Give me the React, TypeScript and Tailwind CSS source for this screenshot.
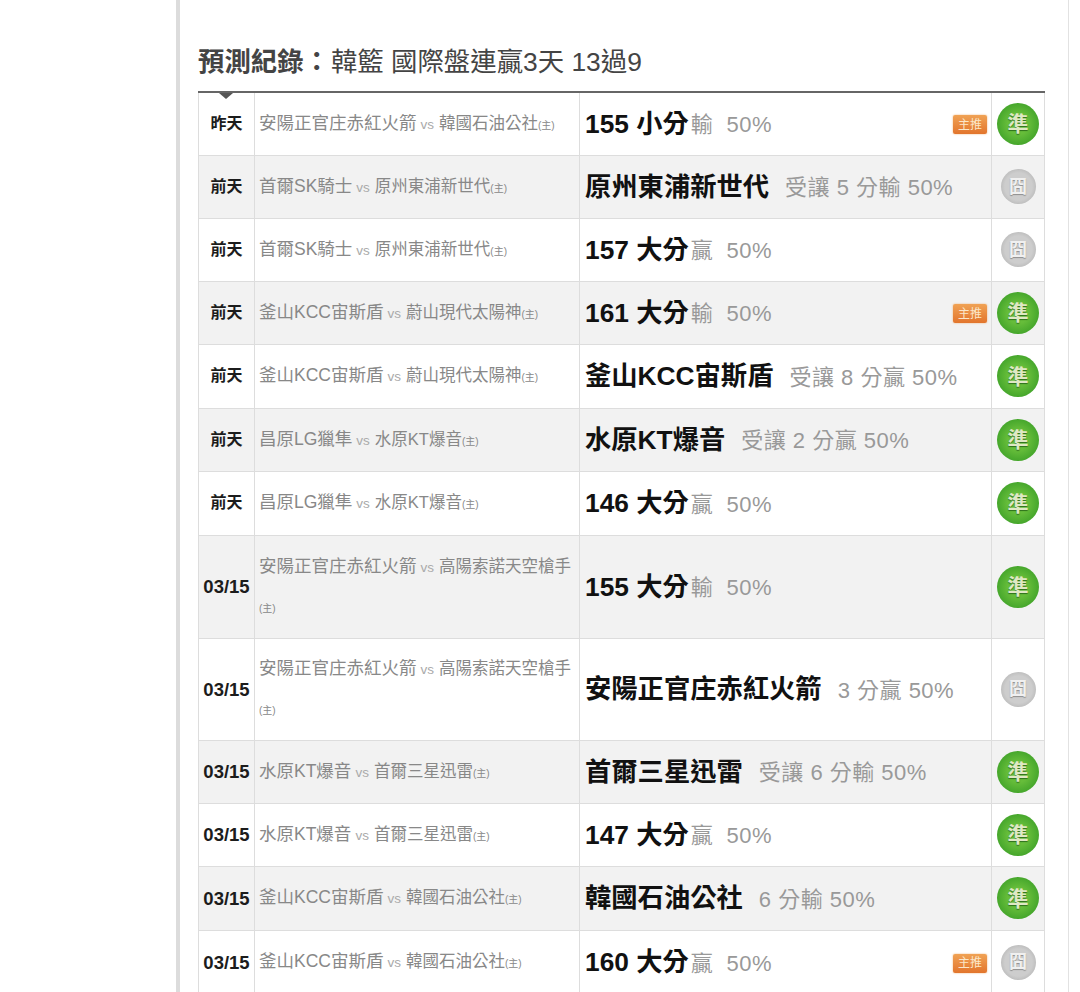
import React from "react";

type Row = {
  date: string;
  home: string;
  away: string;
  pick: string;
  note: string;
  top?: boolean;
  hit: boolean;
  h: number;
};

const rows: Row[] = [
  { date: "昨天", home: "安陽正官庄赤紅火箭", away: "韓國石油公社", pick: "155 小分", note: "輸\u00a0 50%", top: true, hit: true, h: 63 },
  { date: "前天", home: "首爾SK騎士", away: "原州東浦新世代", pick: "原州東浦新世代", note: "受讓 5 分輸 50%", hit: false, h: 63 },
  { date: "前天", home: "首爾SK騎士", away: "原州東浦新世代", pick: "157 大分", note: "贏\u00a0 50%", hit: false, h: 63 },
  { date: "前天", home: "釜山KCC宙斯盾", away: "蔚山現代太陽神", pick: "161 大分", note: "輸\u00a0 50%", top: true, hit: true, h: 63 },
  { date: "前天", home: "釜山KCC宙斯盾", away: "蔚山現代太陽神", pick: "釜山KCC宙斯盾", note: "受讓 8 分贏 50%", hit: true, h: 64 },
  { date: "前天", home: "昌原LG獵隼", away: "水原KT爆音", pick: "水原KT爆音", note: "受讓 2 分贏 50%", hit: true, h: 63 },
  { date: "前天", home: "昌原LG獵隼", away: "水原KT爆音", pick: "146 大分", note: "贏\u00a0 50%", hit: true, h: 64 },
  { date: "03/15", home: "安陽正官庄赤紅火箭", away: "高陽索諾天空槍手", pick: "155 大分", note: "輸\u00a0 50%", hit: true, h: 103 },
  { date: "03/15", home: "安陽正官庄赤紅火箭", away: "高陽索諾天空槍手", pick: "安陽正官庄赤紅火箭", note: "3 分贏 50%", hit: false, h: 102 },
  { date: "03/15", home: "水原KT爆音", away: "首爾三星迅雷", pick: "首爾三星迅雷", note: "受讓 6 分輸 50%", hit: true, h: 63 },
  { date: "03/15", home: "水原KT爆音", away: "首爾三星迅雷", pick: "147 大分", note: "贏\u00a0 50%", hit: true, h: 63 },
  { date: "03/15", home: "釜山KCC宙斯盾", away: "韓國石油公社", pick: "韓國石油公社", note: "6 分輸 50%", hit: true, h: 64 },
  { date: "03/15", home: "釜山KCC宙斯盾", away: "韓國石油公社", pick: "160 大分", note: "贏\u00a0 50%", top: true, hit: false, h: 64 },
];

function TopTag() {
  return (
    <span className="flex h-[19px] w-[34px] items-center justify-center rounded-[2px] bg-gradient-to-b from-[#f0a254] to-[#e2752c] text-[12px] leading-none text-[#fbe6c8] shadow-[0_0_2px_#f0b070]">
      主推
    </span>
  );
}

function Result({ hit }: { hit: boolean }) {
  if (hit) {
    return (
      <span className="flex h-[42px] w-[42px] items-center justify-center rounded-full bg-[radial-gradient(circle,#66bd3a_35%,#2b9420_100%)] text-[21px] font-bold leading-none text-[#dfe8c4] [text-shadow:0_1px_1px_#2e6f1c]">
        準
      </span>
    );
  }
  return (
    <span className="flex h-[35px] w-[35px] items-center justify-center rounded-full bg-[radial-gradient(circle,#cdcdcd_55%,#a5a5a5_100%)] text-[18px] font-bold leading-none text-[#f0f0f0] [text-shadow:0_1px_1px_#8f8f8f]">
      囧
    </span>
  );
}

export default function App() {
  return (
    <div className="h-[992px] overflow-hidden bg-white font-['Liberation_Sans','Noto_Sans_CJK_TC',sans-serif]">
      <div className="ml-[176px] h-full w-[893px] border-l-[4px] border-r border-l-[#dcdcdc] border-r-[#e2e2e2] pl-[18px] pt-[46px]">
        <h2 className="mb-[13px] h-[32px] text-[26.4px] leading-[32px] text-[#444444]">
          <b className="mr-[1px]">預測紀錄：</b>韓籃 國際盤連贏3天 13過9
        </h2>
        <div className="relative w-[846px]">
          <span className="absolute left-[21px] top-[2px] h-0 w-0 border-x-[7px] border-t-[6px] border-x-transparent border-t-[#555555]" />
          <table className="w-full table-fixed border-collapse border-t-2 border-t-[#666666]">
            <colgroup>
              <col className="w-[56px]" />
              <col className="w-[325px]" />
              <col className="w-[412px]" />
              <col className="w-[53px]" />
            </colgroup>
            <tbody>
              {rows.map((r, i) => (
                <tr key={i} className={i % 2 === 1 ? "bg-[#f2f2f2]" : "bg-white"} style={{ height: r.h }}>
                  <td className={`border border-t-0 border-[#dddddd] p-0 text-center font-bold text-[#1c1c1c] ${r.date === "03/15" ? "pt-[1px] text-[18.5px]" : "text-[16px]"}`}>
                    {r.date}
                  </td>
                  <td className="border border-t-0 border-[#dddddd] px-1 pb-0 pt-[1px] text-[17.5px] leading-[38px] text-[#888888]">
                    {r.home}
                    <span className="ml-[4px] mr-[5px] text-[13.5px] text-[#aaaaaa]">vs</span>
                    <span className="text-[16.5px]">{r.away}</span>
                    <span className="text-[10px]">(主)</span>
                  </td>
                  <td className="border border-t-0 border-[#dddddd] pb-0 pl-[5px] pr-1 pt-[2px]">
                    <div className="flex items-center">
                      <span className="text-[26.3px] font-bold text-[#111111]">{r.pick}</span>
                      <span className={`text-[22px] tracking-[0.5px] text-[#999999] ${r.note.includes("\u00a0") ? "ml-[2px]" : "ml-[16px]"}`}>
                        {r.note}
                      </span>
                      {r.top && (
                        <span className="ml-auto">
                          <TopTag />
                        </span>
                      )}
                    </div>
                  </td>
                  <td className="border border-t-0 border-[#dddddd] p-0">
                    <div className="flex justify-center">
                      <Result hit={r.hit} />
                    </div>
                  </td>
                </tr>
              ))}
            </tbody>
          </table>
        </div>
      </div>
    </div>
  );
}
